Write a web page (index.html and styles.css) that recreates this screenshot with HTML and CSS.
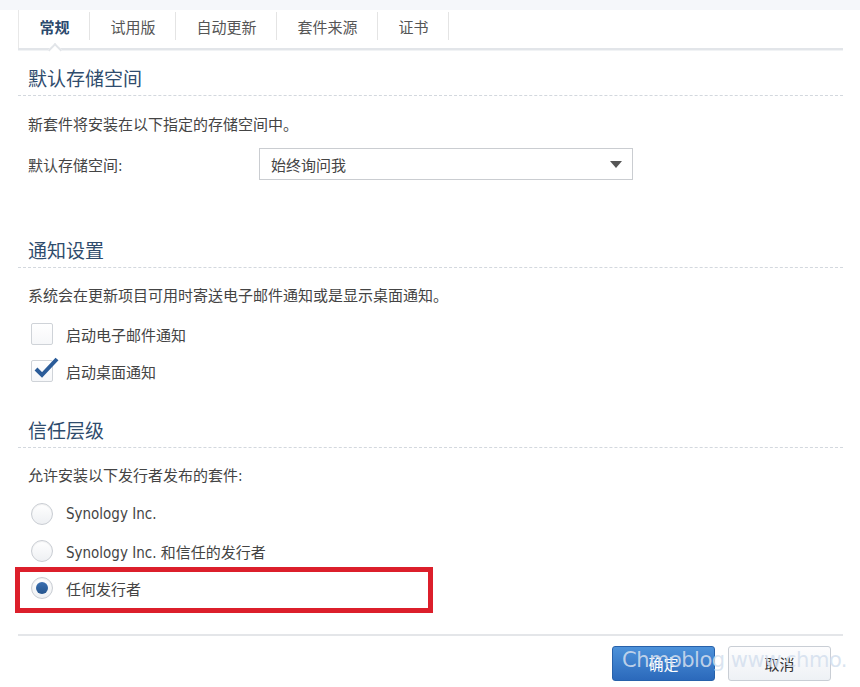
FILE: index.html
```html
<!DOCTYPE html>
<html lang="zh-CN">
<head>
    <meta charset="UTF-8">
    <meta name="viewport" content="width=device-width, initial-scale=1.0">
    <title>套件中心设置</title>
    <link rel="stylesheet" href="styles.css">
</head>
<body>
    <div class="top-strip"></div>
    <div class="panel">
        <div class="tabs">
            <div class="tab active">常规</div>
            <div class="tab">试用版</div>
            <div class="tab">自动更新</div>
            <div class="tab">套件来源</div>
            <div class="tab">证书</div>
        </div>

        <div class="section section-storage">
            <h2 class="section-title">默认存储空间</h2>
            <p class="desc">新套件将安装在以下指定的存储空间中。</p>
            <div class="form-row">
                <label class="form-label">默认存储空间:</label>
                <div class="select">
                    <span>始终询问我</span>
                    <span class="arrow"></span>
                </div>
            </div>
        </div>

        <div class="section">
            <h2 class="section-title">通知设置</h2>
            <p class="desc">系统会在更新项目可用时寄送电子邮件通知或是显示桌面通知。</p>
            <div class="options">
                <div class="option">
                    <span class="checkbox"></span>
                    <span>启动电子邮件通知</span>
                </div>
                <div class="option">
                    <span class="checkbox checked">
                        <svg class="check" width="28" height="26" viewBox="0 0 28 26">
                            <path d="M4 14 L10 20 L25 4" fill="none" stroke="#2b5c99" stroke-width="4" stroke-linejoin="miter"/>
                        </svg>
                    </span>
                    <span>启动桌面通知</span>
                </div>
            </div>
        </div>

        <div class="section">
            <h2 class="section-title">信任层级</h2>
            <p class="desc">允许安装以下发行者发布的套件:</p>
            <div class="options">
                <div class="option">
                    <span class="radio"></span>
                    <span>Synology Inc.</span>
                </div>
                <div class="option">
                    <span class="radio"></span>
                    <span>Synology Inc. 和信任的发行者</span>
                </div>
                <div class="option highlighted">
                    <span class="radio selected"></span>
                    <span>任何发行者</span>
                    <div class="highlight-box"></div>
                </div>
            </div>
        </div>

        <div class="footer">
            <button class="btn btn-primary">确定</button>
            <button class="btn btn-default">取消</button>
            <div class="watermark">Chmoblog www.chmo.</div>
        </div>
    </div>
</body>
</html>
```

FILE: styles.css
```css
body {
    margin: 0;
    background-color: #ffffff;
    font-family: "DejaVu Sans Condensed", "DejaVu Sans", "Noto Sans CJK SC", sans-serif;
    font-size: 15px;
    color: #444;
}
.top-strip {
    height: 10px;
    background-color: #f5f7fa;
}
.panel {
    padding: 0 17px 0 18px;
}
.tabs {
    display: flex;
    height: 38px;
    border-bottom: 2px solid #e2e5e9;
    box-shadow: 0 1px 0 #f1f3f5;
}
.tab {
    position: relative;
    padding: 0 20.5px;
    line-height: 34px;
    font-family: "Noto Sans CJK SC", sans-serif;
    color: #555;
}
.tab::after {
    content: "";
    position: absolute;
    right: 0;
    top: 2px;
    bottom: 8px;
    border-right: 1px solid #e4e4e4;
}
.tab.active {
    border-left: 1px solid #e8e8e8;
    font-weight: bold;
    color: #2c4a6e;
}
.tab.active::before {
    content: "";
    position: absolute;
    left: 50%;
    bottom: -7px;
    width: 8px;
    height: 8px;
    margin-left: -5px;
    background-color: #ffffff;
    border-top: 2px solid #e2e5e9;
    border-left: 2px solid #e2e5e9;
    transform: rotate(45deg);
}
.section {
    margin-top: 34px;
}
.section-storage {
    margin-top: 14px;
    padding-bottom: 22px;
}
.section-title {
    margin: 0;
    padding: 0 10px 3px;
    line-height: 28px;
    font-size: 19px;
    font-weight: normal;
    font-family: "Noto Sans CJK SC", sans-serif;
    color: #2f4c6d;
    border-bottom: 1px dashed #d3d8de;
}
.desc {
    margin: 17px 0 0;
    padding-left: 10px;
    line-height: 22px;
}
.section-storage .desc {
    margin-top: 18px;
}
.form-row {
    display: flex;
    align-items: center;
    margin-top: 12px;
    padding-left: 10px;
}
.form-label {
    width: 231px;
}
.select {
    display: flex;
    align-items: center;
    justify-content: space-between;
    box-sizing: border-box;
    width: 374px;
    height: 32px;
    padding: 0 10px 0 11px;
    border: 1px solid #cacdd1;
    background-color: #ffffff;
}
.arrow {
    width: 0;
    height: 0;
    border-left: 6px solid transparent;
    border-right: 6px solid transparent;
    border-top: 7px solid #555;
}
.options {
    display: flex;
    flex-direction: column;
    gap: 15px;
    margin-top: 16px;
    padding-left: 13px;
}
.option {
    position: relative;
    display: flex;
    align-items: center;
    gap: 13px;
    height: 22px;
}
.checkbox {
    position: relative;
    box-sizing: border-box;
    width: 22px;
    height: 22px;
    border: 1px solid #cfd3d8;
    border-radius: 2px;
    background: linear-gradient(#ffffff, #f6f7f9);
}
.check {
    position: absolute;
    left: 0;
    top: -6px;
}
.radio {
    position: relative;
    box-sizing: border-box;
    width: 22px;
    height: 22px;
    border: 1px solid #c9cdd3;
    border-radius: 50%;
    background: linear-gradient(#ffffff, #eef0f3);
    box-shadow: inset 0 1px 1px rgba(0, 0, 0, 0.06);
}
.radio.selected::after {
    content: "";
    position: absolute;
    left: 4px;
    top: 4px;
    width: 12px;
    height: 12px;
    border-radius: 50%;
    background: linear-gradient(#3d70b1, #24548d);
}
.highlight-box {
    position: absolute;
    left: -16px;
    top: -10px;
    box-sizing: border-box;
    width: 418px;
    height: 46px;
    border: 5px solid #dc1f2b;
}
.footer {
    position: relative;
    display: flex;
    justify-content: flex-end;
    gap: 13px;
    margin-top: 35px;
    padding: 10px 12px 0 0;
    border-top: 2px solid #e4e6e9;
}
.btn {
    box-sizing: border-box;
    width: 103px;
    height: 35px;
    border-radius: 3px;
    font-family: "Noto Sans CJK SC", sans-serif;
    font-size: 15px;
    cursor: pointer;
}
.btn-primary {
    background: linear-gradient(#4d92da, #2b69bb);
    border: 1px solid #2761aa;
    color: #ffffff;
}
.btn-default {
    background: linear-gradient(#fdfdfe, #eef1f5);
    border: 1px solid #c9ced5;
    color: #333;
}
.watermark {
    position: absolute;
    left: 604px;
    top: 12px;
    font-family: "DejaVu Sans", sans-serif;
    font-size: 21px;
    letter-spacing: -0.5px;
    color: rgba(212, 223, 238, 0.85);
    white-space: nowrap;
    pointer-events: none;
}
```
